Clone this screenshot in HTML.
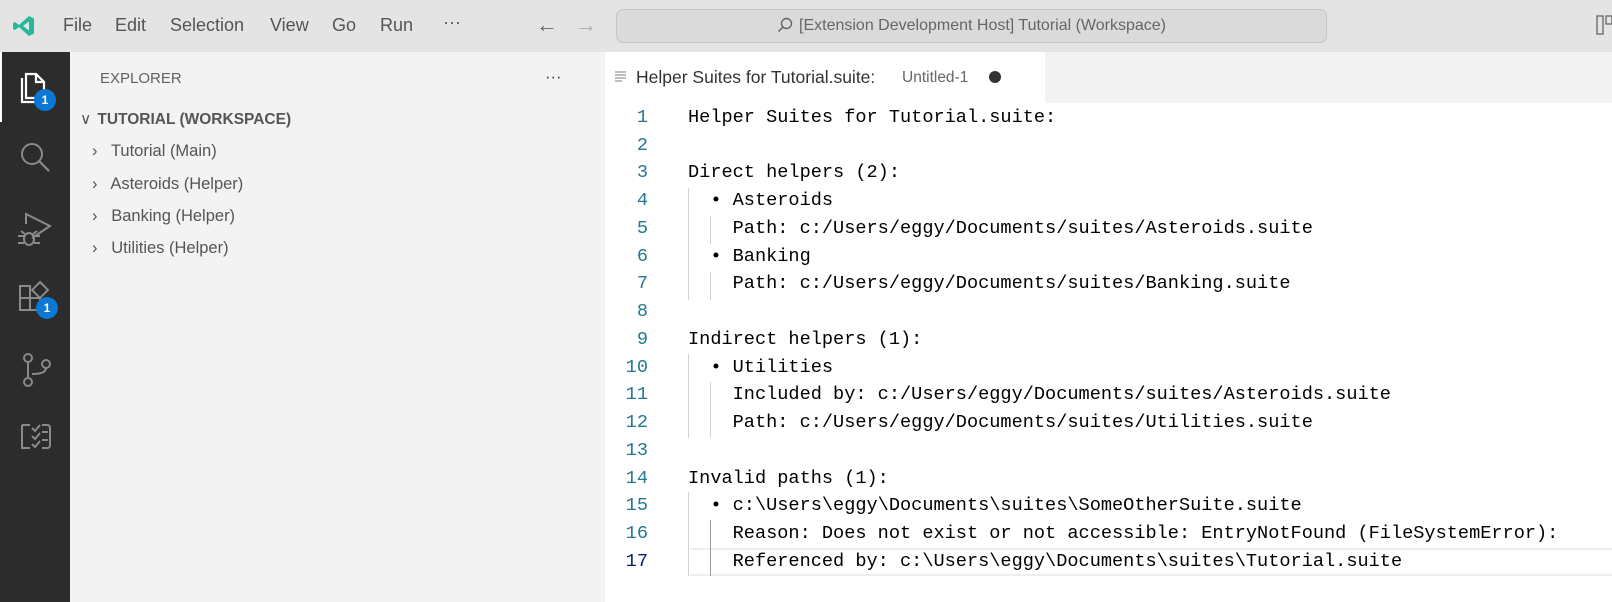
<!DOCTYPE html>
<html><head><meta charset="utf-8"><style>
*{margin:0;padding:0;box-sizing:border-box}
body{width:1612px;height:602px;overflow:hidden;background:#fff;font-family:"Liberation Sans",sans-serif;position:relative}
.title{position:absolute;left:0;top:0;width:1612px;height:52px;background:#e4e4e4}
.menu{position:absolute;top:15px;font-size:18px;color:#555}
.search{position:absolute;left:616px;top:9px;width:711px;height:34px;background:#dadada;border:1px solid #c6c6c6;border-radius:7px;font-size:16px;color:#666;text-align:center;line-height:32px}
.act{position:absolute;left:0;top:52px;width:70px;height:550px;background:#2c2c2c}
.side{position:absolute;left:70px;top:52px;width:535px;height:550px;background:#f3f3f3}
.si{position:absolute;font-size:16.5px;color:#555}
.badge{position:absolute;width:22px;height:22px;border-radius:11px;background:#0a78d4;color:#fff;font-size:12px;font-weight:bold;text-align:center;line-height:22px}
.tabbar{position:absolute;left:605px;top:52px;width:1007px;height:51px;background:#f3f3f3}
.tab{position:absolute;left:605px;top:52px;width:440px;height:51px;background:#fff;font-size:17.5px;color:#333}
.ln{position:absolute;left:590px;width:58px;text-align:right;font-family:"Liberation Mono",monospace;font-size:18.6px;color:#237893}
.code{position:absolute;left:688px;font-family:"Liberation Mono",monospace;font-size:18.6px;color:#000;white-space:pre}
.g{position:absolute;width:1px;background:#d3d3d3}
.ed{position:absolute;left:0;top:2px;width:1612px;height:600px}
</style></head><body>
<div class="title">
<svg style="position:absolute;left:12px;top:14px" width="24" height="24" viewBox="0 0 24 24"><path d="M17 2 L22 4.5 V19.5 L17 22 L7 13 L3 16 L1 15 V9 L3 8 L7 11 Z M17 7.5 L11 12 L17 16.5 Z" fill="#23b99a" fill-rule="evenodd"/></svg>
<span class="menu" style="left:63px">File</span><span class="menu" style="left:115px">Edit</span><span class="menu" style="left:170px">Selection</span><span class="menu" style="left:270px">View</span><span class="menu" style="left:332px">Go</span><span class="menu" style="left:380px">Run</span><span class="menu" style="left:443px;top:12px">···</span>
<span class="menu" style="left:536px;top:12px;font-size:22px;color:#666">←</span><span class="menu" style="left:575px;top:12px;font-size:22px;color:#aaa">→</span>
<div class="search"><svg style="vertical-align:-3px;margin-right:6px" width="16" height="16" viewBox="0 0 16 16"><circle cx="9.5" cy="6.5" r="5" fill="none" stroke="#666" stroke-width="1.4"/><path d="M6 10 L1.5 14.5" stroke="#666" stroke-width="1.5"/></svg>[Extension Development Host] Tutorial (Workspace)</div>
<svg style="position:absolute;left:1596px;top:14px" width="16" height="24"><rect x="1" y="2" width="6" height="18" fill="none" stroke="#666" stroke-width="1.3"/><rect x="10" y="2" width="6" height="8" fill="none" stroke="#666" stroke-width="1.3"/></svg>
</div>
<div class="act">
<div style="position:absolute;left:0;top:0;width:2px;height:70px;background:#fff"></div>
<svg style="position:absolute;left:18px;top:18px" width="30" height="36" viewBox="0 0 30 36"><path d="M8 4 H18 L26 12 V28 H8 Z M18 4 V12 H26" fill="none" stroke="#fff" stroke-width="2.2"/><path d="M4 8 V32 H20" fill="none" stroke="#fff" stroke-width="2.2"/></svg>
<div class="badge" style="left:34px;top:37px">1</div>
<svg style="position:absolute;left:18px;top:88px" width="34" height="34"><circle cx="14" cy="14" r="10" fill="none" stroke="#8a8a8a" stroke-width="2"/><path d="M21 21 L31 31" stroke="#8a8a8a" stroke-width="2.2"/></svg>
<svg style="position:absolute;left:16px;top:158px" width="38" height="40"><path d="M10 14 V4 L34 16 L16 28" fill="none" stroke="#8a8a8a" stroke-width="2"/><ellipse cx="13" cy="29" rx="5" ry="6" fill="none" stroke="#8a8a8a" stroke-width="2"/><path d="M2 26 H8 M2 33 H8 M18 26 H24 M18 33 H24 M5 21 L9 24 M21 21 L17 24" stroke="#8a8a8a" stroke-width="2"/></svg>
<svg style="position:absolute;left:18px;top:228px" width="34" height="34"><path d="M2 6 H12 V30 H2 Z M2 18 H22 V30 H12" fill="none" stroke="#8a8a8a" stroke-width="2"/><path d="M22 2 L30 10 L22 18 L14 10 Z" fill="none" stroke="#8a8a8a" stroke-width="2"/></svg>
<div class="badge" style="left:36px;top:245px">1</div>
<svg style="position:absolute;left:20px;top:298px" width="34" height="40"><circle cx="8" cy="8" r="4" fill="none" stroke="#8a8a8a" stroke-width="2"/><circle cx="8" cy="32" r="4" fill="none" stroke="#8a8a8a" stroke-width="2"/><circle cx="26" cy="14" r="4" fill="none" stroke="#8a8a8a" stroke-width="2"/><path d="M8 12 V28 M26 18 Q26 24 12 24" fill="none" stroke="#8a8a8a" stroke-width="2"/></svg>
<svg style="position:absolute;left:20px;top:370px" width="32" height="30"><path d="M2 3 H10 M2 3 V26 H10 M12 6 L15 9 L20 3 M12 14 L15 17 L20 11 M12 22 L15 25 L20 19 M22 3 H27 Q30 3 30 6 V23 Q30 26 27 26 H22 M22 10 H28 M22 18 H28" fill="none" stroke="#8a8a8a" stroke-width="2"/></svg>
</div>
<div class="side">
<div class="si" style="left:30px;top:18px;font-size:15px;color:#616161">EXPLORER</div>
<div class="si" style="left:475px;top:16px;color:#444">···</div>
<div class="si" style="left:10px;top:58px;font-weight:bold;font-size:15.5px;color:#555"><span style="font-weight:normal;margin-right:6px">∨</span>TUTORIAL (WORKSPACE)</div>
<div class="si" style="left:22px;top:90px">›&nbsp;&nbsp; Tutorial (Main)</div>
<div class="si" style="left:22px;top:123px">›&nbsp;&nbsp; Asteroids (Helper)</div>
<div class="si" style="left:22px;top:155px">›&nbsp;&nbsp; Banking (Helper)</div>
<div class="si" style="left:22px;top:187px">›&nbsp;&nbsp; Utilities (Helper)</div>
</div>
<div class="tabbar"></div>
<div class="tab">
<svg style="position:absolute;left:10px;top:19px" width="12" height="12"><path d="M0 1H11M0 4H11M0 7H11M0 10H7" stroke="#999" stroke-width="1.2"/></svg>
<span style="position:absolute;left:31px;top:15px">Helper Suites for Tutorial.suite:</span>
<span style="position:absolute;left:297px;top:17px;font-size:15.5px;color:#666">Untitled-1</span>
<span style="position:absolute;left:384px;top:19px;width:12px;height:12px;border-radius:6px;background:#333"></span>
</div>
<div class="ed">
<div style="position:absolute;left:690px;top:546px;width:922px;height:28px;border-top:2px solid #eee;border-bottom:2px solid #eee"></div>
<div class="g" style="left:688px;top:186px;height:112px"></div>
<div class="g" style="left:710px;top:214px;height:28px"></div>
<div class="g" style="left:710px;top:270px;height:28px"></div>
<div class="g" style="left:688px;top:352px;height:84px"></div>
<div class="g" style="left:710px;top:380px;height:56px"></div>
<div class="g" style="left:688px;top:490px;height:84px"></div>
<div class="g" style="left:710px;top:518px;height:56px;background:#999"></div>
<div class="ln" style="top:105px">1</div><div class="code" style="top:105px">Helper Suites for Tutorial.suite:</div>
<div class="ln" style="top:133px">2</div>
<div class="ln" style="top:160px">3</div><div class="code" style="top:160px">Direct helpers (2):</div>
<div class="ln" style="top:188px">4</div><div class="code" style="top:188px">  • Asteroids</div>
<div class="ln" style="top:216px">5</div><div class="code" style="top:216px">    Path: c:/Users/eggy/Documents/suites/Asteroids.suite</div>
<div class="ln" style="top:244px">6</div><div class="code" style="top:244px">  • Banking</div>
<div class="ln" style="top:271px">7</div><div class="code" style="top:271px">    Path: c:/Users/eggy/Documents/suites/Banking.suite</div>
<div class="ln" style="top:299px">8</div>
<div class="ln" style="top:327px">9</div><div class="code" style="top:327px">Indirect helpers (1):</div>
<div class="ln" style="top:355px">10</div><div class="code" style="top:355px">  • Utilities</div>
<div class="ln" style="top:382px">11</div><div class="code" style="top:382px">    Included by: c:/Users/eggy/Documents/suites/Asteroids.suite</div>
<div class="ln" style="top:410px">12</div><div class="code" style="top:410px">    Path: c:/Users/eggy/Documents/suites/Utilities.suite</div>
<div class="ln" style="top:438px">13</div>
<div class="ln" style="top:466px">14</div><div class="code" style="top:466px">Invalid paths (1):</div>
<div class="ln" style="top:493px">15</div><div class="code" style="top:493px">  • c:\Users\eggy\Documents\suites\SomeOtherSuite.suite</div>
<div class="ln" style="top:521px">16</div><div class="code" style="top:521px">    Reason: Does not exist or not accessible: EntryNotFound (FileSystemError):</div>
<div class="ln" style="top:549px;color:#0b216f">17</div><div class="code" style="top:549px">    Referenced by: c:\Users\eggy\Documents\suites\Tutorial.suite</div>
</div>
</body></html>
